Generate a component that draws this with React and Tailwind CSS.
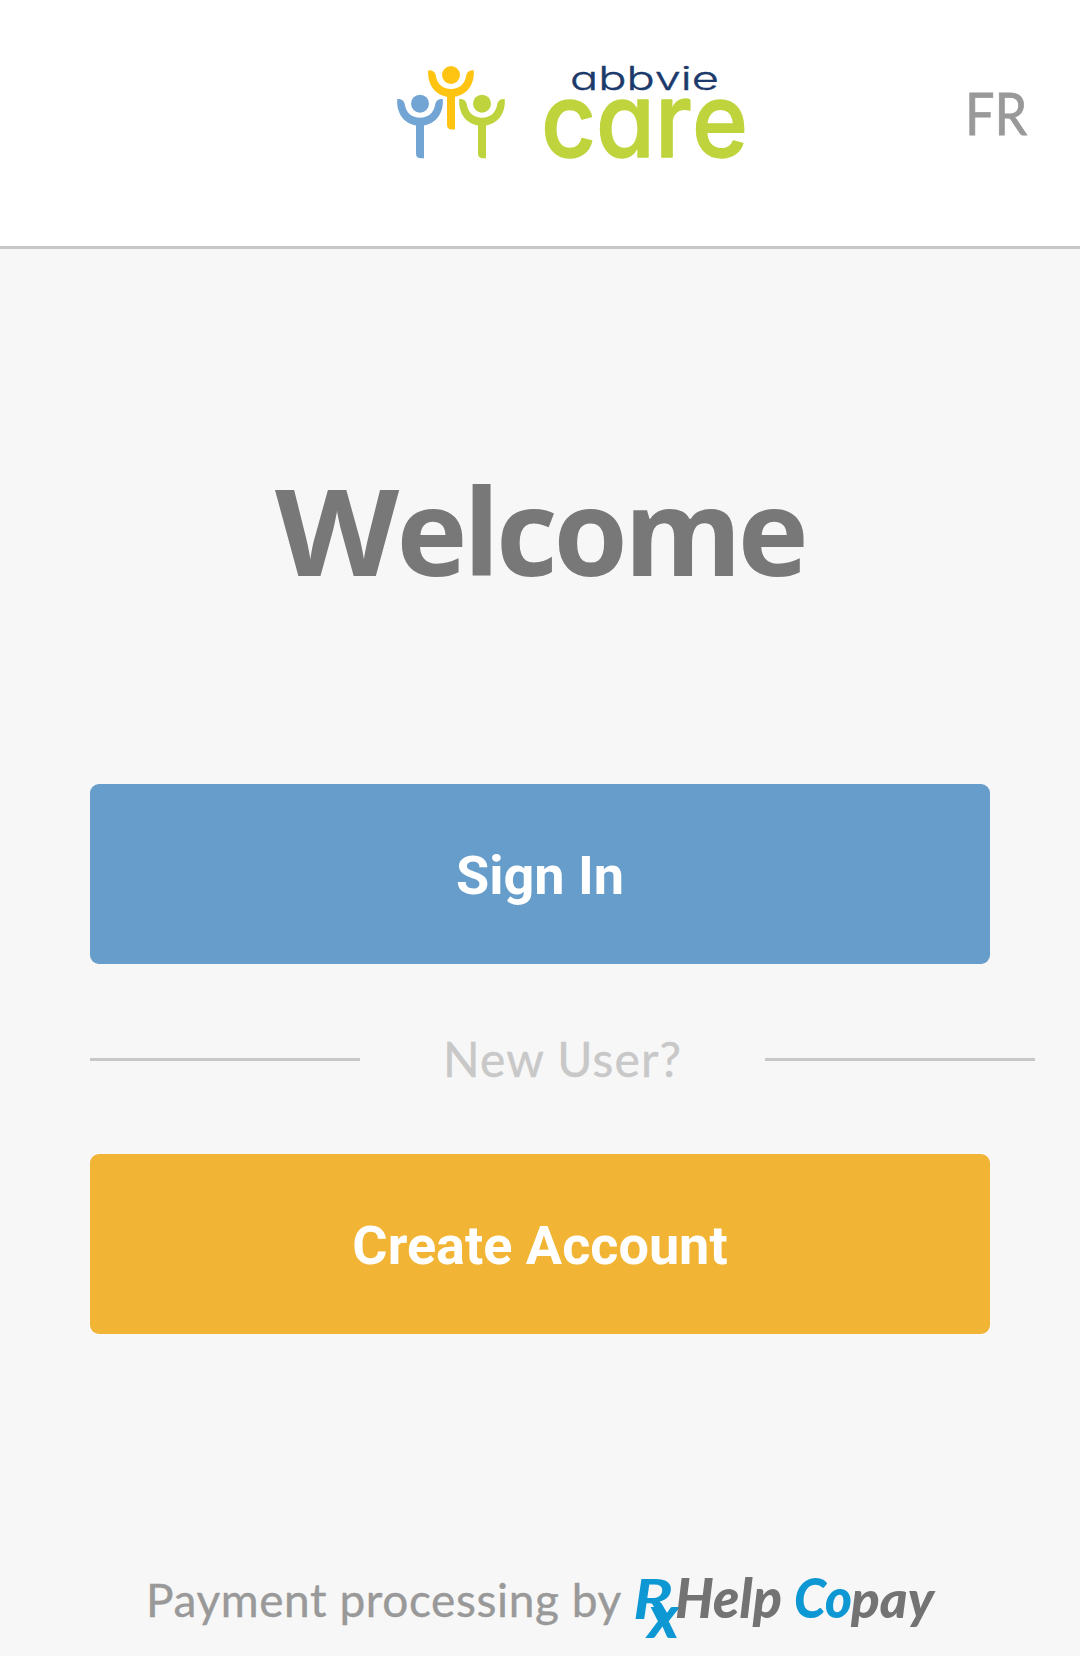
const PERSON =
  'M-22.7 -4.7 C-19 -5 -16 -3.5 -15.3 0 C-14.2 9 -8 14 0 14 C8 14 14.2 9 15.3 0 C16 -3.5 19 -5 22.7 -4.7 C24 9 16 20 4 21.7 V54.5 H1 C-2 54.5 -4 53 -4 50 V21.7 C-16 20 -24 9 -22.7 -4.7Z'

function Person({ x, y, color }) {
  return (
    <g transform={`translate(${x} ${y})`} fill={color}>
      <circle r="9" />
      <path d={PERSON} />
    </g>
  )
}

function CareLogo() {
  return (
    <svg width="360" height="120" viewBox="390 50 360 120" className="shrink-0 overflow-visible" role="img" aria-label="abbvie care">
      <Person x={420} y={103.7} color="#72a5d3" />
      <Person x={451} y={75} color="#ffc412" />
      <Person x={482} y={103.7} color="#bfd43c" />
      {/* cv11 switches Inter to the single-storey a */}
      <g className="font-['Inter'] [font-feature-settings:'cv11'] [font-kerning:none]" strokeLinejoin="round">
        <text
          x="570"
          y="89.5"
          fontSize="33"
          fontWeight="300"
          fill="#1b3a6b"
          stroke="#1b3a6b"
          strokeWidth="0.4"
          textLength="149"
          lengthAdjust="spacingAndGlyphs"
        >
          abbvie
        </text>
        <text
          x="541"
          y="156.5"
          fontSize="104"
          fontWeight="500"
          fill="#bfd43c"
          stroke="#bfd43c"
          strokeWidth="1.4"
          textLength="207"
          lengthAdjust="spacingAndGlyphs"
        >
          care
        </text>
      </g>
    </svg>
  )
}

function CopayLogo() {
  return (
    <svg width="302" height="62" viewBox="633 1578 302 62" className="shrink-0 overflow-visible" role="img" aria-label="RxHelp Copay">
      <g className="font-['Lato'] font-black italic">
        <text x="633" y="1618.5" fontSize="56" fontWeight="700" fill="#0d98d4" textLength="40" lengthAdjust="spacingAndGlyphs">R</text>
        <text x="648" y="1638" fontSize="59" fill="#0d98d4" textLength="31" lengthAdjust="spacingAndGlyphs">x</text>
        <text x="675" y="1618" fontSize="55" fill="#737373" textLength="107" lengthAdjust="spacingAndGlyphs">Help</text>
        <text x="794" y="1618" fontSize="55" fill="#0d98d4" textLength="58" lengthAdjust="spacingAndGlyphs">Co</text>
        <text x="851" y="1618" fontSize="52" fill="#737373" textLength="83" lengthAdjust="spacingAndGlyphs">pay</text>
      </g>
    </svg>
  )
}

export default function App() {
  return (
    <div className="flex h-[1656px] w-[1080px] flex-col overflow-hidden bg-[#f7f7f7] font-['Lato',sans-serif]">
      <header className="flex h-[249px] shrink-0 items-start justify-between border-b-[3px] border-[#c8c8c8] bg-white pt-[50px] pr-[53px] pl-[390px]">
        <CareLogo />
        <button className="mt-[28px] origin-right scale-x-90 text-[58px] leading-[70px] text-[#999999] [-webkit-text-stroke:0.8px_#999999]">
          FR
        </button>
      </header>

      <main className="flex flex-1 flex-col px-[90px]">
        <h1 className="mt-[201px] text-center font-['Open_Sans'] text-[120px] leading-[160px] font-bold tracking-[-4px] text-[#787878]">
          <span className="mr-[9px] inline-block origin-left scale-x-[1.07]">W</span>elcome
        </h1>

        <button className="mt-[174px] h-[180px] shrink-0 rounded-[9px] bg-[#669dca] pt-[2px] font-['Roboto'] text-[54px] font-bold text-white">
          Sign In
        </button>

        <div className="-mr-[45px] flex h-[190px] shrink-0 items-center justify-between">
          <span className="h-[3px] w-[270px] bg-[#c8c8c8]" />
          <span className="text-[48px] leading-[60px] tracking-[1.1px] text-[#c8c8c8] [-webkit-text-stroke:0.4px_#c8c8c8]">New User?</span>
          <span className="h-[3px] w-[270px] bg-[#c8c8c8]" />
        </div>

        <button className="h-[180px] shrink-0 rounded-[9px] bg-[#f1b434] pt-[2px] font-['Roboto'] text-[54px] font-bold text-white">
          Create Account
        </button>
      </main>

      <footer className="flex h-[78px] shrink-0 items-start pl-[146px]">
        <span className="-mt-[5px] w-[487px] text-[46px] leading-[54px] tracking-[0.6px] whitespace-nowrap text-[#999999] [-webkit-text-stroke:0.4px_#999999]">
          Payment processing by
        </span>
        <CopayLogo />
      </footer>
    </div>
  )
}
